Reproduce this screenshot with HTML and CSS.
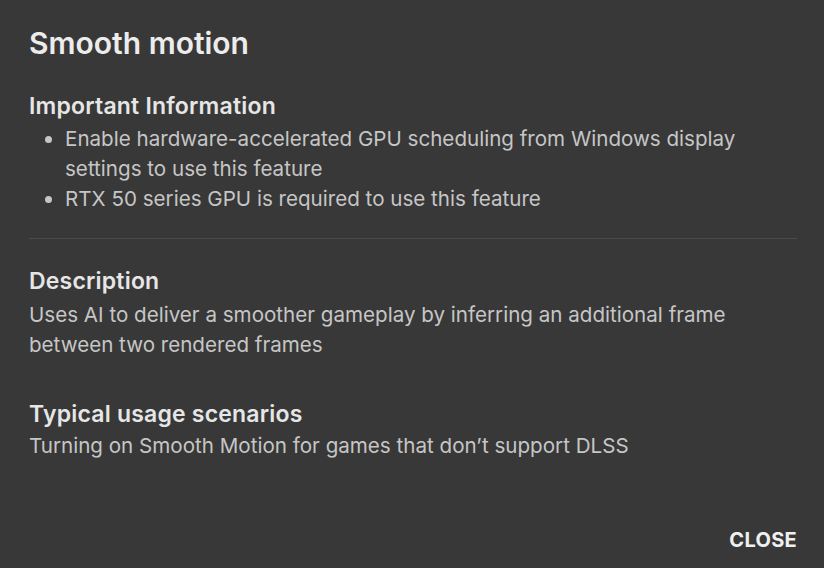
FILE: index.html
```html
<!DOCTYPE html>
<html>
<head>
<meta charset="utf-8">
<link rel="stylesheet" href="styles.css">
</head>
<body>
<div class="dialog">
  <h1 class="title">Smooth motion</h1>
  <section class="section">
    <h2 class="heading">Important Information</h2>
    <ul class="list">
      <li>Enable hardware-accelerated GPU scheduling from Windows display settings to use this feature</li>
      <li>RTX 50 series GPU is required to use this feature</li>
    </ul>
  </section>
  <hr class="divider">
  <section class="section">
    <h2 class="heading">Description</h2>
    <p class="text">Uses AI to deliver a smoother gameplay by inferring an additional frame between two rendered frames</p>
  </section>
  <section class="section usage">
    <h2 class="heading">Typical usage scenarios</h2>
    <p class="text">Turning on Smooth Motion for games that don’t support DLSS</p>
  </section>
  <div class="actions">
    <button class="close">CLOSE</button>
  </div>
</div>
</body>
</html>
```
FILE: styles.css
```css
html, body {
  margin: 0;
  padding: 0;
  background: #383838;
}
body {
  font-family: Inter, "Noto Sans", sans-serif;
  width: 824px;
  height: 568px;
  overflow: hidden;
}
.dialog {
  box-sizing: border-box;
  height: 568px;
  padding: 26px 27px 0 29px;
  display: flex;
  flex-direction: column;
}
.title {
  margin: 0;
  font-size: 30px;
  font-weight: 600;
  line-height: 34px;
  color: #ececec;
}
.heading {
  margin: 0;
  font-size: 23px;
  font-weight: 600;
  line-height: 30px;
  color: #e6e6e6;
  letter-spacing: 0.2px;
}
.section:first-of-type .heading {
  margin-top: 31px;
}
.list {
  margin: 3px 0 0;
  padding-left: 36px;
  font-size: 20.6px;
  line-height: 30px;
  color: #c6c6c6;
}
.text {
  margin: 4px 0 0;
  font-size: 20.6px;
  line-height: 30px;
  color: #c6c6c6;
}
.usage .text {
  margin-top: 2px;
}
.divider {
  border: 0;
  border-top: 1px solid #4a4a4a;
  margin: 24px 0 27px;
}
.usage {
  margin-top: 39px;
}
.actions {
  margin-top: auto;
  display: flex;
  justify-content: flex-end;
  padding-bottom: 12px;
}
.close {
  background: none;
  border: 0;
  padding: 4px 0;
  font-family: inherit;
  font-size: 20px;
  font-weight: 700;
  color: #f0f0f0;
  letter-spacing: 0.3px;
}
```
